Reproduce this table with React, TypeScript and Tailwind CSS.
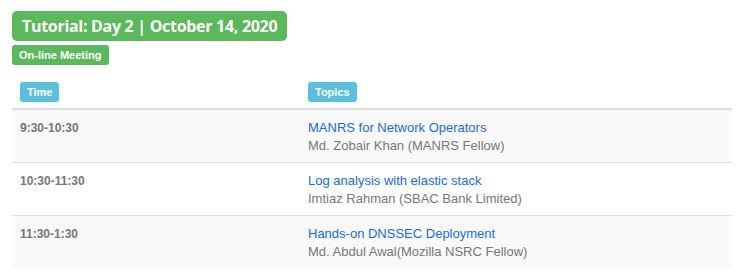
const sessions = [
  { time: '9:30-10:30', topic: 'MANRS for Network Operators', speaker: 'Md. Zobair Khan (MANRS Fellow)' },
  { time: '10:30-11:30', topic: 'Log analysis with elastic stack', speaker: 'Imtiaz Rahman (SBAC Bank Limited)' },
  { time: '11:30-1:30', topic: 'Hands-on DNSSEC Deployment', speaker: 'Md. Abdul Awal(Mozilla NSRC Fellow)' },
]

function Label({ children }: { children: React.ReactNode }) {
  return (
    <span className="inline-block h-5 rounded-[3px] bg-[#5bc0de] px-[7px] text-[11px] font-bold leading-5 text-white">
      {children}
    </span>
  )
}

export default function App() {
  return (
    <div className="h-[276px] w-[742px] overflow-hidden bg-white pl-3 pt-[11px] font-['Liberation_Sans',Arial,sans-serif]">
      <div className="flex flex-col items-start">
        <h2 className="h-[30px] rounded-[5px] bg-[#5cb85c] px-[10px] font-['Open_Sans',sans-serif] text-[16px] font-bold leading-[30px] tracking-[-0.3px] text-white">
          Tutorial: Day 2 | October 14, 2020
        </h2>
        <span className="mt-1 h-5 rounded-[3px] bg-[#5cb85c] px-[7px] text-[11px] font-bold leading-5 text-white">
          On-line Meeting
        </span>
      </div>

      <table className="mt-[9px] w-[720px] border-collapse text-[13px] leading-[18px]">
        <thead>
          <tr className="border-b-2 border-[#dddddd]">
            <th className="w-[288px] px-2 pb-[6px] pt-2 text-left">
              <Label>Time</Label>
            </th>
            <th className="px-2 pb-[6px] pt-2 text-left">
              <Label>Topics</Label>
            </th>
          </tr>
        </thead>
        <tbody>
          {sessions.map((s, i) => (
            <tr key={s.time} className={`border-t border-[#dddddd] ${i % 2 === 0 ? 'bg-[#f9f9f9]' : 'bg-white'}`}>
              <td className="px-2 pb-[7px] pt-[9px] align-top text-[12px] font-bold text-[#777777]">{s.time}</td>
              <td className="px-2 pb-[7px] pt-[9px] align-top">
                <a href="#" className="block text-[#1a6be0]">
                  {s.topic}
                </a>
                <div className="text-[#777777]">{s.speaker}</div>
              </td>
            </tr>
          ))}
        </tbody>
      </table>
    </div>
  )
}
